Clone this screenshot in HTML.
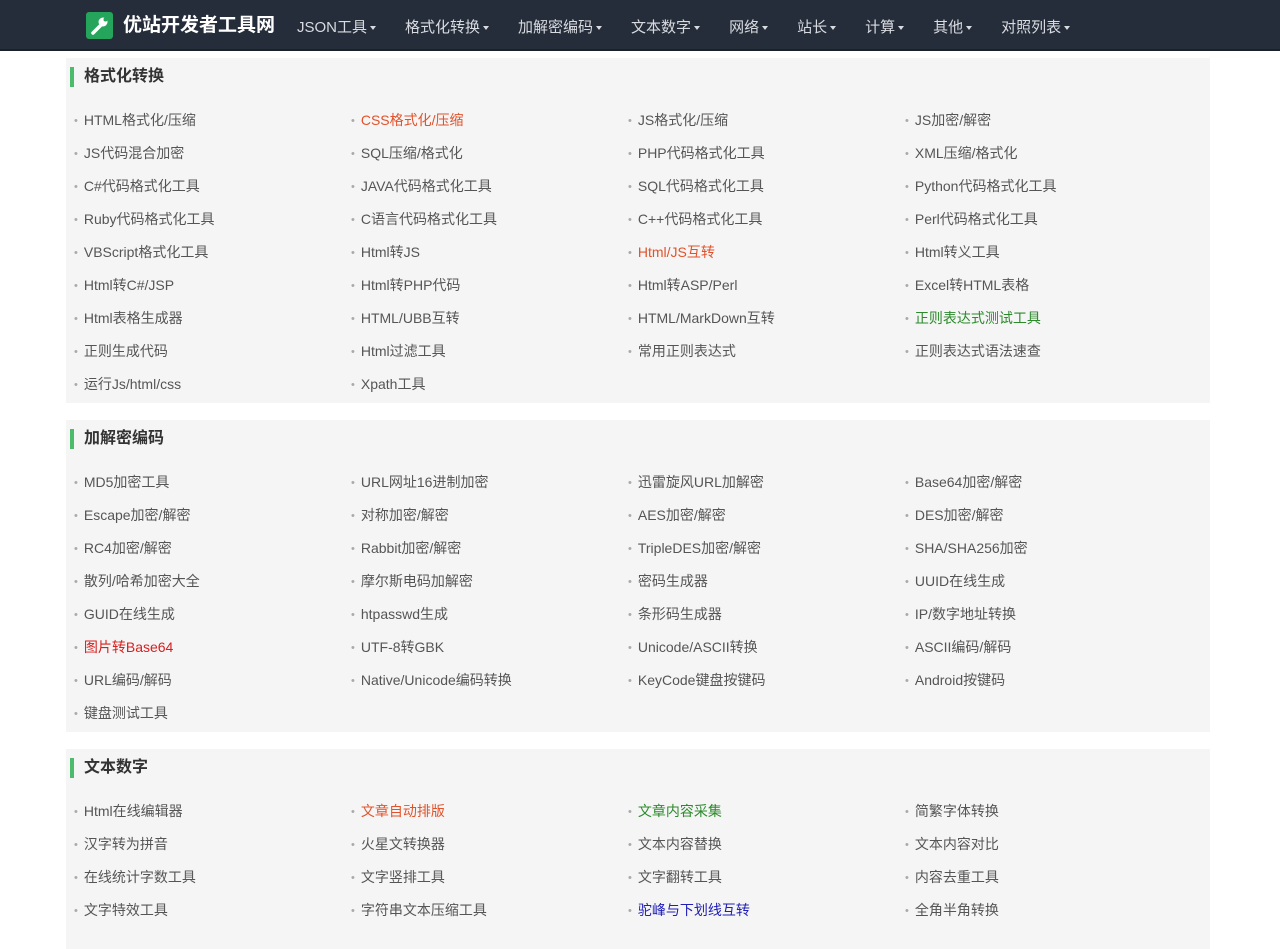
<!DOCTYPE html>
<html><head><meta charset="utf-8"><style>
*{margin:0;padding:0;box-sizing:border-box}
body{width:1280px;height:925px;overflow:hidden;background:#fff;font-family:"Liberation Sans","Noto Sans CJK SC",sans-serif;font-size:14px;color:#555}
.nav{height:51px;background:#262d3a;border-bottom:2px solid #1b212b;position:relative}
.logo{position:absolute;left:86px;top:12px;width:27px;height:27px;background:#25a55b;border-radius:3px}
.brand{position:absolute;left:123px;top:14px;color:#fff;font-size:19px;font-weight:bold;line-height:24px}
.menu{position:absolute;left:297px;top:0;height:51px;display:flex;color:#d8dbe0;font-size:15px;line-height:55px}
.menu span{margin-right:29px}
.menu span:after{content:"";display:inline-block;margin-left:3px;vertical-align:middle;border-left:3px solid transparent;border-right:3px solid transparent;border-top:4px solid #d8dbe0}
.sec{position:absolute;left:66px;width:1144px;background:#f5f5f5}
.sec h2{height:38px;font-size:16px;font-weight:bold;color:#333;line-height:38px;padding-left:18px;position:relative}
.sec h2:before{content:"";position:absolute;left:4px;top:9px;width:4px;height:20px;background:#4cbb6c}
.grid{display:grid;grid-template-columns:277px 277px 277px 277px;padding:8px 0 3px 8px}
.grid a{height:33px;line-height:33px;color:#555;text-decoration:none;white-space:nowrap}
.grid a:before{content:"•";color:#aaa;font-size:11px;margin-right:6px;vertical-align:1px}
.o{color:#e2522a!important}.g{color:#2c8a2c!important}.b{color:#2020b8!important}.r{color:#d81e1e!important}
</style></head><body>
<div class="nav">
<div class="logo"><svg width="27" height="27" viewBox="0 0 27 27"><path d="M7 21 L15 13" stroke="#fff" stroke-width="3.5" stroke-linecap="round"/><circle cx="17" cy="10" r="4.5" fill="#fff"/><circle cx="19.5" cy="7.5" r="2" fill="#25a55b"/></svg></div>
<div class="brand">优站开发者工具网</div>
<div class="menu"><span>JSON工具</span><span>格式化转换</span><span>加解密编码</span><span>文本数字</span><span>网络</span><span>站长</span><span>计算</span><span>其他</span><span>对照列表</span></div>
</div>
<div class="sec" style="top:58px;height:345px"><h2>格式化转换</h2><div class="grid">
<a>HTML格式化/压缩</a><a class="o">CSS格式化/压缩</a><a>JS格式化/压缩</a><a>JS加密/解密</a>
<a>JS代码混合加密</a><a>SQL压缩/格式化</a><a>PHP代码格式化工具</a><a>XML压缩/格式化</a>
<a>C#代码格式化工具</a><a>JAVA代码格式化工具</a><a>SQL代码格式化工具</a><a>Python代码格式化工具</a>
<a>Ruby代码格式化工具</a><a>C语言代码格式化工具</a><a>C++代码格式化工具</a><a>Perl代码格式化工具</a>
<a>VBScript格式化工具</a><a>Html转JS</a><a class="o">Html/JS互转</a><a>Html转义工具</a>
<a>Html转C#/JSP</a><a>Html转PHP代码</a><a>Html转ASP/Perl</a><a>Excel转HTML表格</a>
<a>Html表格生成器</a><a>HTML/UBB互转</a><a>HTML/MarkDown互转</a><a class="g">正则表达式测试工具</a>
<a>正则生成代码</a><a>Html过滤工具</a><a>常用正则表达式</a><a>正则表达式语法速查</a>
<a>运行Js/html/css</a><a>Xpath工具</a>
</div></div>
<div class="sec" style="top:420px;height:312px"><h2>加解密编码</h2><div class="grid">
<a>MD5加密工具</a><a>URL网址16进制加密</a><a>迅雷旋风URL加解密</a><a>Base64加密/解密</a>
<a>Escape加密/解密</a><a>对称加密/解密</a><a>AES加密/解密</a><a>DES加密/解密</a>
<a>RC4加密/解密</a><a>Rabbit加密/解密</a><a>TripleDES加密/解密</a><a>SHA/SHA256加密</a>
<a>散列/哈希加密大全</a><a>摩尔斯电码加解密</a><a>密码生成器</a><a>UUID在线生成</a>
<a>GUID在线生成</a><a>htpasswd生成</a><a>条形码生成器</a><a>IP/数字地址转换</a>
<a class="r">图片转Base64</a><a>UTF-8转GBK</a><a>Unicode/ASCII转换</a><a>ASCII编码/解码</a>
<a>URL编码/解码</a><a>Native/Unicode编码转换</a><a>KeyCode键盘按键码</a><a>Android按键码</a>
<a>键盘测试工具</a>
</div></div>
<div class="sec" style="top:749px;height:200px"><h2>文本数字</h2><div class="grid">
<a>Html在线编辑器</a><a class="o">文章自动排版</a><a class="g">文章内容采集</a><a>简繁字体转换</a>
<a>汉字转为拼音</a><a>火星文转换器</a><a>文本内容替换</a><a>文本内容对比</a>
<a>在线统计字数工具</a><a>文字竖排工具</a><a>文字翻转工具</a><a>内容去重工具</a>
<a>文字特效工具</a><a>字符串文本压缩工具</a><a class="b">驼峰与下划线互转</a><a>全角半角转换</a>
</div></div>
</body></html>
